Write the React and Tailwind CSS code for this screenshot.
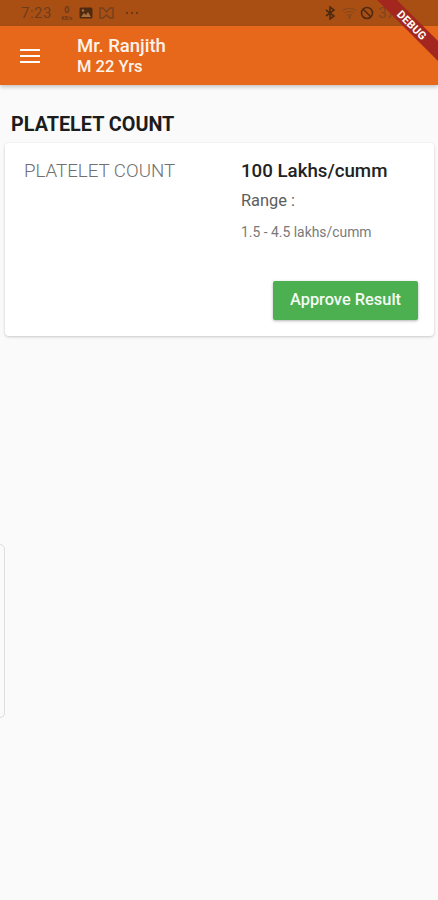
import { useState } from 'react';

function StatusBar() {
  return (
    <div className="flex h-[26px] items-center bg-[#a94f14] pl-[21px] pr-[43px] text-[#6b3a1a]">
      <span className="text-[15px] leading-none tracking-[0.5px] text-[#6e3d1c]">7:23</span>
      {/* network speed */}
      <div className="ml-[8px] flex w-[14px] flex-col items-center leading-none">
        <span className="text-[9px] font-bold leading-[9px]">0</span>
        <span className="text-[5px] font-bold leading-[6px]">KB/s</span>
      </div>
      {/* gallery */}
      <svg className="ml-[5px]" width="14" height="12" viewBox="0 0 14 12">
        <rect x="0.5" y="0.5" width="13" height="11" rx="1.5" fill="#4f2a10" />
        <path d="M2 10l3-4 2 2 2-3 3 5z" fill="#a9703c" />
        <circle cx="4" cy="3.5" r="1.2" fill="#a9703c" />
      </svg>
      {/* mail-ish icon */}
      <svg className="ml-[6px]" width="15" height="12" viewBox="0 0 15 12" fill="none" stroke="#74411e" strokeWidth="1.4">
        <path d="M1 1v10h3l3.500-3 3.500 3h3V1h-3L7.500 5 4 1z" />
      </svg>
      <span className="ml-[12px] flex gap-[3px]">
        <i className="h-[2px] w-[2px] rounded-full bg-[#5a3014]" />
        <i className="h-[2px] w-[2px] rounded-full bg-[#5a3014]" />
        <i className="h-[2px] w-[2px] rounded-full bg-[#5a3014]" />
      </span>
      <div className="ml-auto flex items-center">
        {/* bluetooth */}
        <svg width="12" height="14" viewBox="0 0 12 14" fill="none" stroke="#4f2a10" strokeWidth="1.6">
          <path d="M2 4l8 6-4 3V1l4 3-8 6" />
        </svg>
        {/* wifi */}
        <svg className="ml-[6px]" width="15" height="12" viewBox="0 0 15 12" fill="none" stroke="#86491f" strokeWidth="1.2">
          <path d="M1 3.500c3.500-3 9.500-3 13 0M3 6c2.500-2 6.500-2 9 0M5 8.500c1.500-1 3.500-1 5 0" />
          <circle cx="7.500" cy="10.500" r="0.8" fill="#86491f" />
        </svg>
        {/* dnd */}
        <svg className="ml-[3px]" width="14" height="14" viewBox="0 0 14 14" fill="none" stroke="#4f2a10" strokeWidth="1.6">
          <circle cx="7" cy="7" r="5.500" />
          <path d="M3 3l8 8" />
        </svg>
        <span className="ml-[4px] text-[15px] leading-none text-[#7c4420]">37</span>
      </div>
    </div>
  );
}

function AppBar() {
  return (
    <div className="relative z-10 flex h-[59px] items-center bg-[#e8681b] shadow-[0_2px_4px_rgba(0,0,0,0.22)]">
      <button className="ml-[20px] flex w-[20px] flex-col gap-[4px]">
        <span className="h-[2px] w-full bg-white" />
        <span className="h-[2px] w-full bg-white" />
        <span className="h-[2px] w-full bg-white" />
      </button>
      <div className="ml-[37px] flex flex-col font-medium text-[#fdf3ea]">
        <span className="text-[18.500px] leading-[21px]">Mr. Ranjith</span>
        <span className="text-[16.500px] leading-[19px]">M 22 Yrs</span>
      </div>
    </div>
  );
}

export default function App() {
  const [approved, setApproved] = useState(false);

  return (
    <div className="relative h-[900px] w-[438px] overflow-hidden bg-[#fafafa] font-['Roboto',sans-serif]">
      <StatusBar />
      <AppBar />

      <h2 className="ml-[11px] mt-[27px] text-[19.800px] font-bold leading-[25px] text-[#1c1c1c]">PLATELET COUNT</h2>

      <div className="ml-[5px] mr-[4px] mt-[6px] h-[193px] rounded-[4px] bg-white shadow-[0_1px_3px_rgba(0,0,0,0.2)]">
        <div className="flex pt-[18px]">
          <div className="ml-[19px] w-[217px] text-[18.700px] font-light leading-[20px] text-[#707070]">PLATELET COUNT</div>
          <div className="flex flex-col">
            <span className="text-[18.700px] font-medium leading-[20px] text-[#222222]">100 Lakhs/cumm</span>
            <span className="mt-[10px] text-[16.400px] leading-[20px] text-[#5c5c5c]">Range :</span>
            <span className="mt-[12px] text-[13.900px] leading-[18px] text-[#7a7a7a]">1.5 - 4.5 lakhs/cumm</span>
          </div>
        </div>
        <div className="mr-[16px] mt-[40px] flex justify-end">
          <button
            onClick={() => setApproved(true)}
            className="h-[39px] w-[145px] rounded-[2px] bg-[#4caf50] text-[16.400px] font-medium text-[#f4fbf4] shadow-[0_1px_3px_rgba(0,0,0,0.3)]"
          >
            {approved ? 'Approved' : 'Approve Result'}
          </button>
        </div>
      </div>

      {/* drawer handle peeking from the left edge */}
      <div className="absolute left-[-10px] top-[544px] h-[174px] w-[15px] rounded-[5px] border border-[#dedede] bg-[#fafafa]" />

      {/* debug ribbon */}
      <div className="absolute right-[-24px] top-[18px] z-20 flex h-[14px] w-[100px] rotate-45 items-center justify-center bg-[#a3271f] text-[11px] font-bold leading-none tracking-[0.3px] text-white">
        DEBUG
      </div>
    </div>
  );
}
